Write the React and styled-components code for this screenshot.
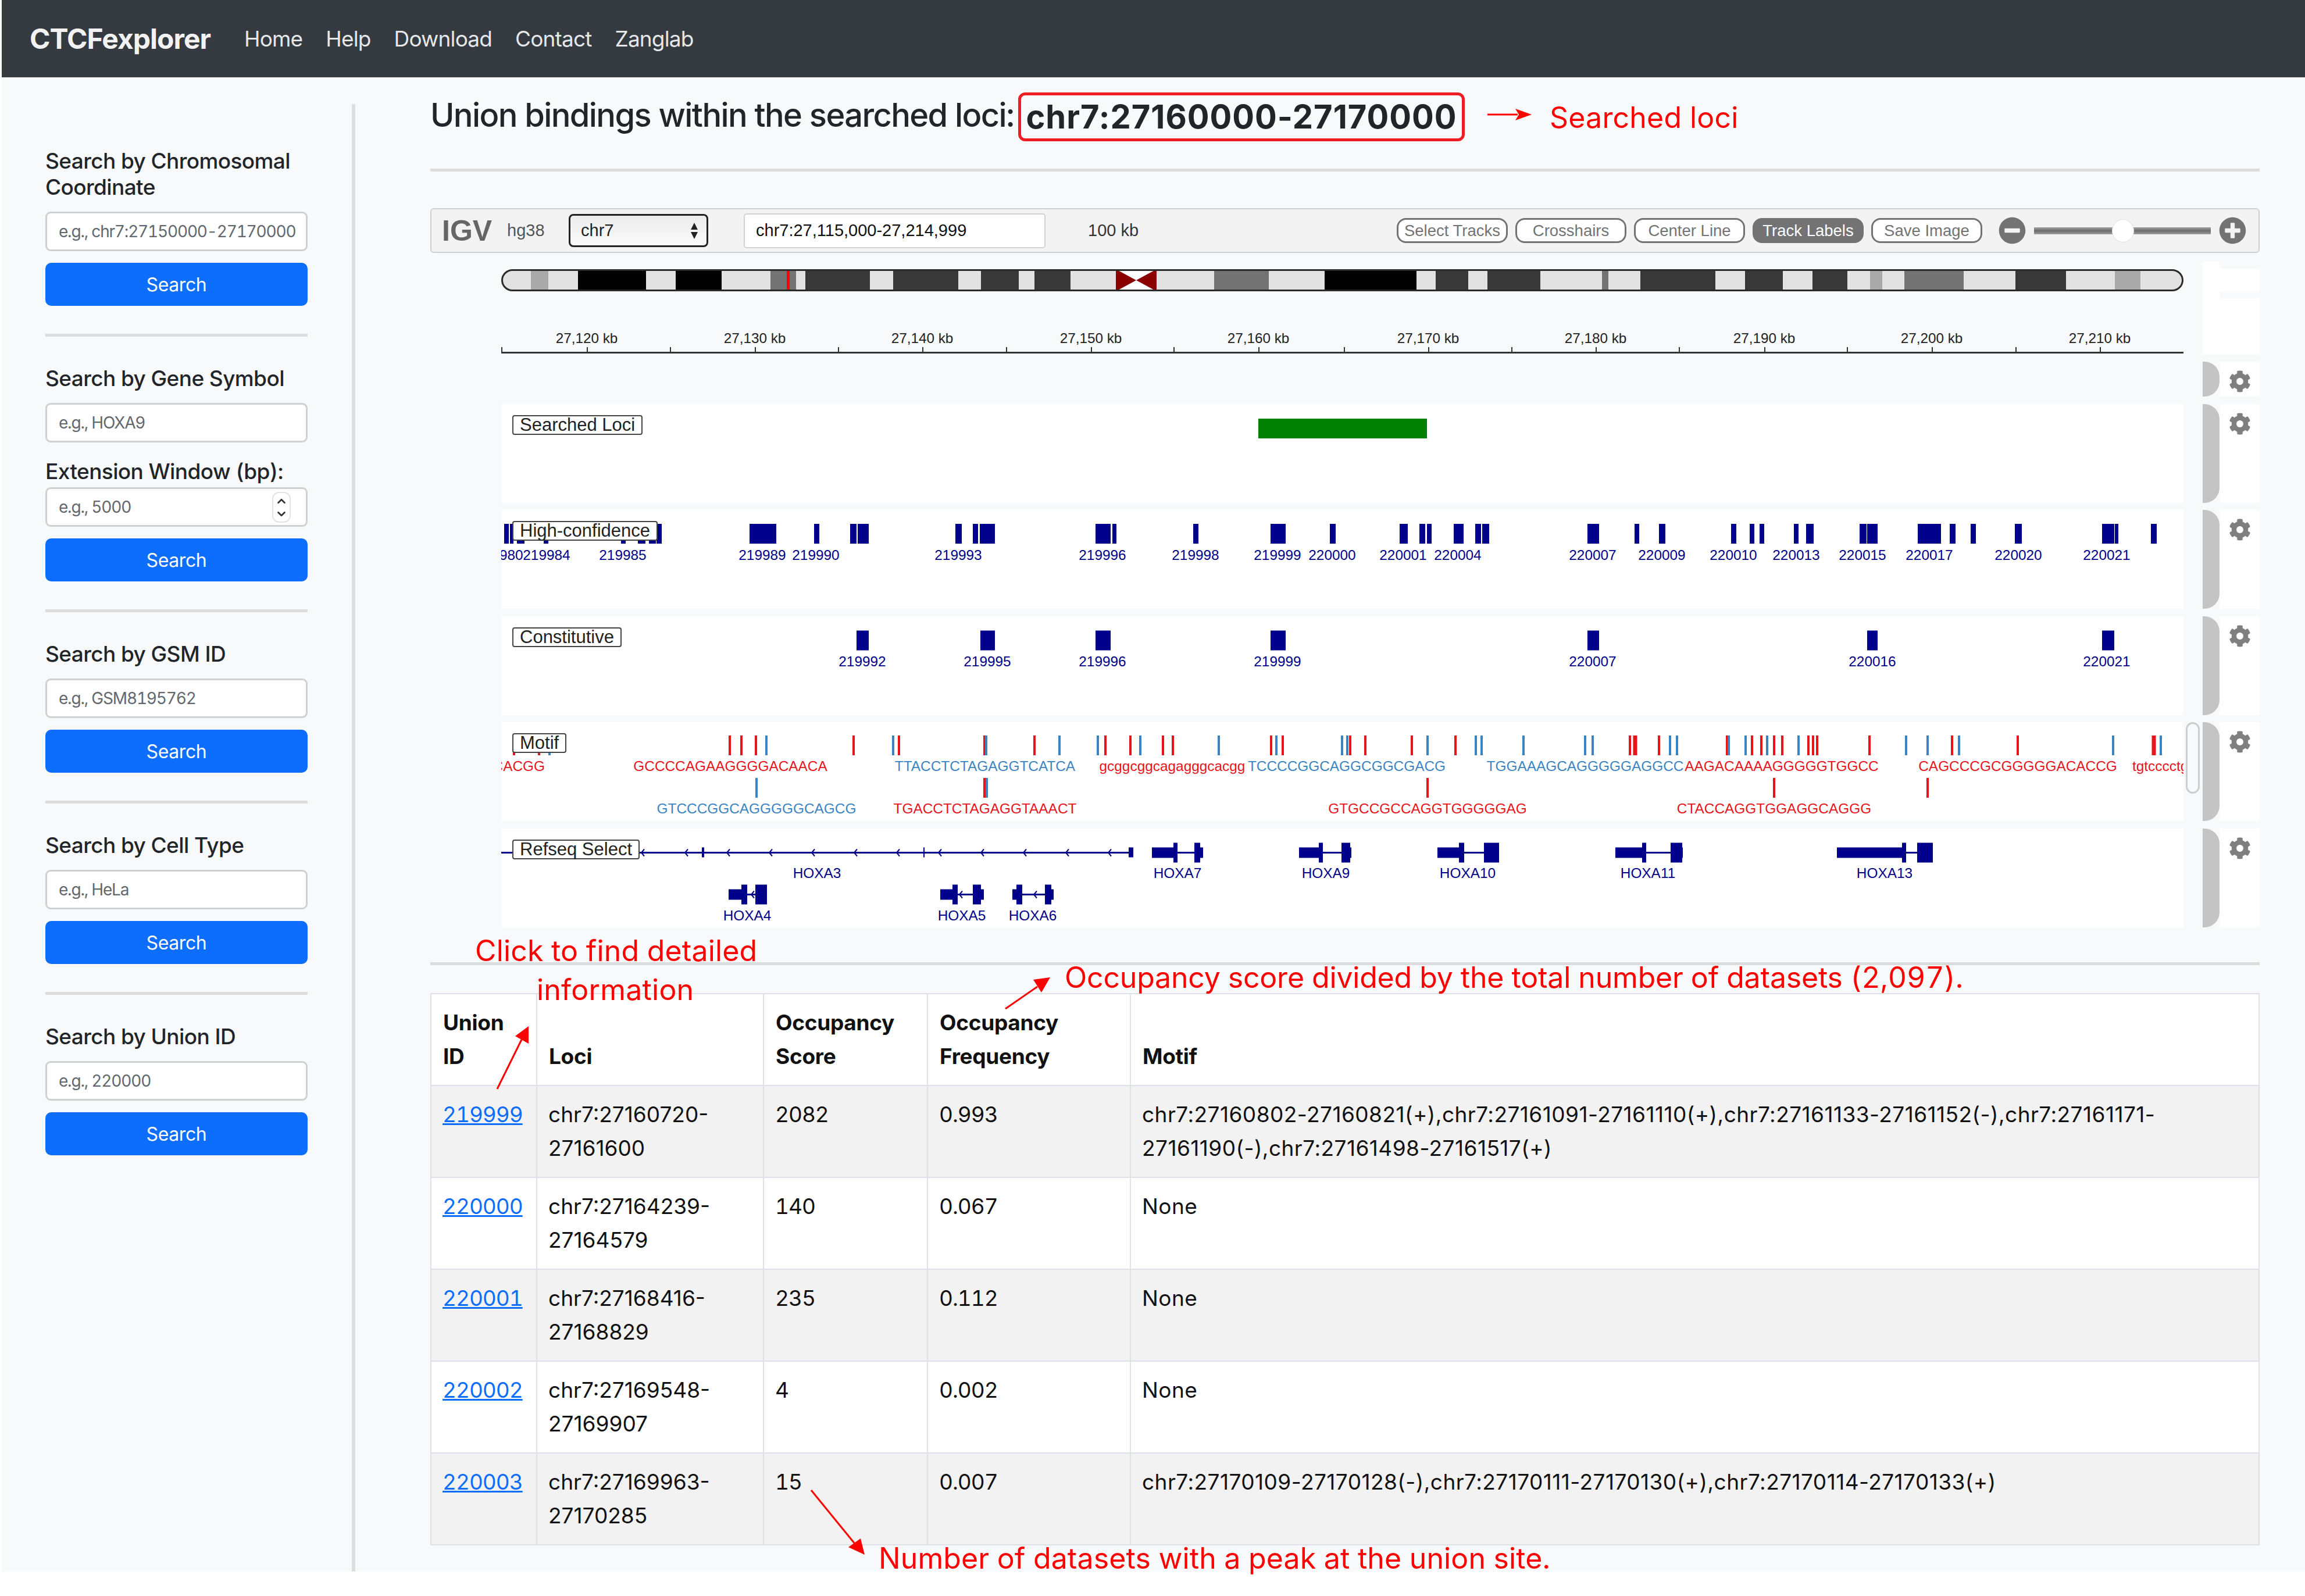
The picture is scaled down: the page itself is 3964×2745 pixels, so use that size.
import styled, { createGlobalStyle } from "styled-components";
import { FaCog, FaMinusCircle, FaPlusCircle } from "react-icons/fa";
import { ChevronUp, ChevronDown } from "lucide-react";

const UI_FONT = `Inter, "Liberation Sans", sans-serif`;
const IGV_FONT = `"Liberation Sans", Arial, sans-serif`;
const NAVY = "#00008b";
const RED = "#e8141c";
const BLUE = "#3a84c4";

const GlobalStyle = createGlobalStyle`
  html, body {
    margin: 0;
    padding: 0;
    background: #fff;
  }
  * {
    box-sizing: border-box;
  }
`;

const Page = styled.div`
  position: relative;
  width: 3964px;
  height: 2745px;
  overflow: hidden;
  font-family: ${UI_FONT};
  font-variant-numeric: tabular-nums;
  color: #212529;
`;

const Frame = styled.div`
  margin-left: 3px;
  height: 2703px;
  background: #f8f9fa;
  display: flex;
  flex-direction: column;
`;

const NavBar = styled.nav`
  height: 133px;
  background: #343a40;
  display: flex;
  align-items: center;
  padding-left: 48px;
`;

const Brand = styled.a`
  width: 369px;
  font-size: 48px;
  font-weight: 700;
  letter-spacing: -1px;
  color: #f2f2f2;
`;

const NavLinks = styled.div`
  display: flex;
  gap: 40px;
`;

const NavLink = styled.a`
  font-size: 37px;
  letter-spacing: -0.85px;
  color: #e6e7e8;
`;

const Body = styled.div`
  flex: 1;
  display: flex;
  align-items: stretch;
`;

const Sidebar = styled.aside`
  width: 608px;
  margin-top: 46px;
  padding: 75px 76px 0 75px;
  border-right: 6px solid #dcdfe2;
`;

const SearchGroup = styled.section`
  display: flex;
  flex-direction: column;
`;

const SearchTitle = styled.div`
  font-size: 37px;
  line-height: 45px;
  letter-spacing: -0.6px;
  font-weight: 500;
  margin-bottom: ${({ $gap }) => $gap || "20px"};
`;

const FieldWrap = styled.div`
  position: relative;
  margin-bottom: ${({ $gap }) => $gap || "20px"};
`;

const Field = styled.input`
  display: block;
  width: 100%;
  height: 68px;
  padding: 0 6px 0 20px;
  background: #fff;
  border: 3px solid #ced0d2;
  border-radius: 9px;
  font-family: ${UI_FONT};
  font-size: 28px;
  letter-spacing: -1.2px;
  font-variant-numeric: tabular-nums;
  outline: none;

  &::placeholder {
    color: #62686e;
    opacity: 1;
  }
`;

const Spinner = styled.div`
  position: absolute;
  right: 29px;
  top: 8px;
  width: 32px;
  height: 53px;
  background: #fff;
  border: 2px solid #e3e3e3;
  border-radius: 12px;
  display: flex;
  flex-direction: column;
  align-items: center;
  justify-content: center;
  color: #333;
`;

const SearchButton = styled.button`
  display: block;
  width: 100%;
  height: 74px;
  background: #0d6efd;
  border: none;
  border-radius: 10px;
  color: #fff;
  font-family: ${UI_FONT};
  font-size: 32px;
  letter-spacing: -0.4px;
`;

const SideRule = styled.hr`
  height: 5px;
  margin: 48px 0 49px;
  border: none;
  background: #dcdcdc;
`;

const Main = styled.main`
  width: 3146px;
  margin-left: 129px;
  display: flex;
  flex-direction: column;
`;

const Headline = styled.div`
  height: 157px;
  display: flex;
  align-items: flex-start;
  padding-top: 26px;
  font-size: 56px;
  line-height: 78px;
  letter-spacing: -1.6px;
  font-weight: 500;
`;

const LociBox = styled.span`
  height: 84px;
  margin-left: 8px;
  padding: 0 8px;
  display: flex;
  align-items: center;
  border: 5px solid #ee1c25;
  border-radius: 12px;
  font-weight: 700;
  font-variant-numeric: normal;
  letter-spacing: 1px;
`;

const Rule = styled.hr`
  height: 5px;
  margin: 0;
  border: none;
  background: #dcdcdc;
`;

const IgvBar = styled.div`
  margin-top: 63px;
  height: 77px;
  display: flex;
  align-items: center;
  background: #f3f3f3;
  border: 2px solid #cfcfcf;
  border-radius: 6px;
  font-family: ${IGV_FONT};
  font-size: 29px;
`;

const IgvLogo = styled.span`
  margin-left: 18px;
  width: 112px;
  font-size: 50px;
  font-weight: 700;
  color: #666;
`;

const Genome = styled.span`
  width: 106px;
  color: #555;
`;

const ChromSelect = styled.div`
  width: 240px;
  height: 57px;
  padding: 0 14px 0 18px;
  display: flex;
  align-items: center;
  justify-content: space-between;
  background: linear-gradient(#ececec, #fafafa);
  border: 3px solid #222;
  border-radius: 8px;
  color: #222;
`;

const SelectArrows = styled.svg`
  width: 14px;
  height: 30px;
`;

const LocusBox = styled.div`
  margin-left: 61px;
  width: 519px;
  height: 60px;
  padding-left: 19px;
  display: flex;
  align-items: center;
  background: #fff;
  border: 2px solid #d2d2d2;
  border-radius: 5px;
  color: #111;
`;

const WindowSize = styled.span`
  margin-left: 73px;
  width: 531px;
  color: #333;
`;

const BarButtons = styled.div`
  display: flex;
  gap: 13px;
`;

const BarButton = styled.button`
  width: 191px;
  height: 43px;
  padding: 0;
  display: flex;
  align-items: center;
  justify-content: center;
  background: ${({ $active }) => ($active ? "#737373" : "#fff")};
  border: 3px solid #737373;
  border-radius: 16px;
  color: ${({ $active }) => ($active ? "#fff" : "#737373")};
  font-family: ${IGV_FONT};
  font-size: 27.5px;
`;

const ZoomControl = styled.div`
  margin-left: 28px;
  display: flex;
  align-items: center;
  gap: 14px;
  color: #737373;
  font-size: 47px;

  svg {
    display: block;
  }
`;

const ZoomTrack = styled.div`
  position: relative;
  width: 304px;
  height: 12px;
  background: linear-gradient(#a0a0a0, #6c6c6c 50%, #a0a0a0);
`;

const ZoomThumb = styled.div`
  position: absolute;
  left: 134px;
  top: -14px;
  width: 38px;
  height: 40px;
  border-radius: 50%;
  background: #fff;
  border: 1px solid #e2e2e2;
`;

const TrackGroup = styled.div`
  margin-top: 15px;
`;

const TrackStack = styled.div`
  margin-top: 12px;
  display: flex;
  flex-direction: column;
  gap: 12.5px;
`;

const TrackRow = styled.div`
  margin-left: 122px;
  height: ${({ $height }) => $height || "170px"};
  display: grid;
  grid-template-columns: 2893px 33px 29px 69px;
`;

const Viewport = styled.div`
  position: relative;
  overflow: hidden;
  padding-top: ${({ $top }) => $top || "0"};
  background: ${({ $white }) => ($white ? "#fff" : "transparent")};

  svg {
    display: block;
    width: 100%;
  }
`;

const TrackLabel = styled.div`
  position: absolute;
  left: 19px;
  top: 19px;
  height: 34px;
  padding: 0 11px;
  display: flex;
  align-items: center;
  background: #fff;
  border: 2px solid #444;
  border-radius: 4px;
  font-family: ${IGV_FONT};
  font-size: 31px;
  color: #222;
  white-space: nowrap;
`;

const Gutter = styled.div``;

const ScrollThumb = styled.div`
  width: 24px;
  height: 123px;
  margin-left: 4px;
  background: #f8f9fa;
  border: 3px solid #cbcdcf;
  border-radius: 12px;
`;

const Handle = styled.div`
  background: ${({ $empty }) => ($empty ? "#fff" : "#c4c4c4")};
  border-radius: ${({ $empty }) => ($empty ? "0" : "0 26px 26px 0")};
`;

const GearCell = styled.div`
  height: ${({ $height }) => $height || "auto"};
  margin-top: ${({ $top }) => $top || "0"};
  padding: 15px 0 0 16px;
  background: #fff;
  color: #7f7f7f;
  font-size: 38px;
  line-height: 0;
`;

const ResultRule = styled(Rule)`
  margin-top: 60px;
`;

const ResultTable = styled.table`
  margin-top: 48px;
  width: 3146px;
  table-layout: fixed;
  border-collapse: collapse;
  background: #fff;
  font-size: 37px;
  line-height: 58px;

  th, td {
    border: 2.5px solid #dee2e6;
    text-align: left;
  }

  th {
    padding: 20px;
    vertical-align: bottom;
    font-weight: 700;
    letter-spacing: -0.3px;
    color: #111;
  }

  td {
    padding: 20px 19px;
    vertical-align: top;
    color: #111;
  }

  tbody tr:nth-child(odd) td {
    background: #f2f2f2;
  }
`;

const Cell = styled.td`
  letter-spacing: -1.05px;
`;

const CoordCell = styled.td`
  font-variant-numeric: normal;
  letter-spacing: ${({ $spacing }) => $spacing || "0"};
`;

const UnionLink = styled.a`
  color: #0d6efd;
  text-decoration: underline;
`;

/* red notes drawn on the screenshot, they lie over everything else */
const Note = styled.div`
  position: absolute;
  left: ${({ $x }) => $x}px;
  top: ${({ $y }) => $y}px;
  font-family: ${UI_FONT};
  font-size: 50px;
  line-height: 64px;
  letter-spacing: ${({ $spacing }) => $spacing || "0"};
  color: #ff0000;
  white-space: nowrap;
`;

const ArrowLayer = styled.svg`
  position: absolute;
  left: 0;
  top: 0;
  width: 3964px;
  height: 2745px;
  pointer-events: none;
`;

const searchGroups = [
  { title: <>Search by Chromosomal<br />Coordinate</>, placeholder: "e.g., chr7:27150000-27170000" },
  { title: "Search by Gene Symbol", placeholder: "e.g., HOXA9", extension: true },
  { title: "Search by GSM ID", placeholder: "e.g., GSM8195762" },
  { title: "Search by Cell Type", placeholder: "e.g., HeLa" },
  { title: "Search by Union ID", placeholder: "e.g., 220000" },
];

const barButtons = ["Select Tracks", "Crosshairs", "Center Line", "Track Labels", "Save Image"];

const rows = [
  { id: "219999", loci: "chr7:27160720-27161600", score: 2082, freq: "0.993", motif: "chr7:27160802-27160821(+),chr7:27161091-27161110(+),chr7:27161133-27161152(-),chr7:27161171-27161190(-),chr7:27161498-27161517(+)" },
  { id: "220000", loci: "chr7:27164239-27164579", score: 140, freq: "0.067", motif: "None" },
  { id: "220001", loci: "chr7:27168416-27168829", score: 235, freq: "0.112", motif: "None" },
  { id: "220002", loci: "chr7:27169548-27169907", score: 4, freq: "0.002", motif: "None" },
  { id: "220003", loci: "chr7:27169963-27170285", score: 15, freq: "0.007", motif: "chr7:27170109-27170128(-),chr7:27170111-27170130(+),chr7:27170114-27170133(+)" },
];

// [from, to, fill] in page x
const LIGHT = "#e2e2e2";
const DARK = "#383838";
const MID = "#737373";
const PALE = "#a9a9a9";
const bands = [
  [862, 913, LIGHT], [913, 943, PALE], [943, 994, LIGHT], [994, 1111, "#000"], [1111, 1162, LIGHT],
  [1162, 1241, "#000"], [1241, 1325, LIGHT], [1325, 1369, MID], [1369, 1385, LIGHT], [1385, 1496, DARK],
  [1496, 1536, LIGHT], [1536, 1648, DARK], [1648, 1687, LIGHT], [1687, 1752, DARK], [1752, 1779, LIGHT],
  [1779, 1841, DARK], [1841, 1919, LIGHT], [1989, 2088, LIGHT], [2088, 2182, MID], [2182, 2278, LIGHT],
  [2278, 2436, "#000"], [2436, 2469, LIGHT], [2469, 2525, DARK], [2525, 2558, LIGHT], [2558, 2649, DARK],
  [2649, 2755, LIGHT], [2755, 2766, MID], [2766, 2821, LIGHT], [2821, 2950, DARK], [2950, 3001, LIGHT],
  [3001, 3066, DARK], [3066, 3117, LIGHT], [3117, 3177, DARK], [3177, 3216, LIGHT], [3216, 3237, PALE],
  [3237, 3275, LIGHT], [3275, 3377, MID], [3377, 3466, LIGHT], [3466, 3553, DARK], [3553, 3637, LIGHT],
  [3637, 3681, PALE], [3681, 3755, LIGHT],
];

const minorTicks = [1152, 1441, 1730, 2018, 2311, 2599, 2887, 3176, 3466];
const rulerMarks = [
  [1009, "27,120 kb"], [1298, "27,130 kb"], [1586, "27,140 kb"], [1876, "27,150 kb"], [2164, "27,160 kb"],
  [2456, "27,170 kb"], [2744, "27,180 kb"], [3034, "27,190 kb"], [3322, "27,200 kb"], [3611, "27,210 kb"],
];

const confidenceBars = [
  [867, 875], [877, 883], [889, 902], [935, 943], [1068, 1076], [1097, 1110], [1116, 1128], [1129, 1138],
  [1289, 1335], [1400, 1409], [1462, 1473], [1475, 1494], [1643, 1654], [1673, 1682], [1685, 1711],
  [1884, 1910], [1913, 1920], [2052, 2061], [2185, 2211], [2287, 2297], [2407, 2421], [2441, 2451],
  [2454, 2462], [2500, 2517], [2537, 2547], [2549, 2561], [2730, 2750], [2811, 2819], [2853, 2864],
  [2977, 2986], [3009, 3017], [3026, 3034], [3085, 3093], [3106, 3119], [3198, 3210], [3211, 3229],
  [3298, 3338], [3353, 3363], [3389, 3398], [3465, 3477], [3615, 3636], [3637, 3643], [3699, 3709],
];
const confidenceNames = [
  [859, "219980"], [940, "219984"], [1071, "219985"], [1311, "219989"], [1403, "219990"], [1648, "219993"],
  [1896, "219996"], [2056, "219998"], [2197, "219999"], [2291, "220000"], [2413, "220001"], [2507, "220004"],
  [2739, "220007"], [2858, "220009"], [2981, "220010"], [3089, "220013"], [3203, "220015"], [3318, "220017"],
  [3471, "220020"], [3623, "220021"],
];
const constitutiveBars = [[1473, 1494], [1686, 1711], [1884, 1910], [2185, 2211], [2730, 2750], [3211, 3229], [3615, 3636]];
const constitutiveNames = [
  [1483, "219992"], [1698, "219995"], [1896, "219996"], [2197, "219999"], [2739, "220007"], [3220, "220016"], [3623, "220021"],
];

// motif ticks: x, strand (r/b), width
const motifTop = [
  [884, "r"], [927, "r"], [945, "b"], [1255, "r"], [1275, "r"], [1300, "r"], [1318, "b"], [1468, "r"], [1536, "b"],
  [1546, "r"], [1693, "r"], [1696, "b"], [1779, "r"], [1822, "b"], [1888, "b"], [1901, "r"], [1944, "r"], [1961, "b"],
  [2000, "r"], [2017, "r"], [2096, "b"], [2186, "r"], [2195, "b"], [2206, "r"], [2308, "b"], [2317, "b"], [2322, "r"],
  [2348, "r"], [2428, "r"], [2455, "b"], [2503, "r"], [2538, "b"], [2548, "b"], [2620, "b"], [2726, "b"], [2739, "b"],
  [2803, "r"], [2812, "r", 7], [2853, "r"], [2872, "b"], [2884, "b"], [2970, "r"], [2973, "b"], [3002, "b"], [3013, "r"],
  [3029, "r"], [3039, "b"], [3051, "r"], [3065, "r"], [3093, "b"], [3110, "r"], [3118, "r"], [3125, "r"], [3215, "r"],
  [3278, "b"], [3315, "b"], [3357, "r"], [3369, "b"], [3470, "r"], [3634, "b"], [3704, "r", 7], [3716, "b"],
];
const motifBottom = [[1301, "b"], [1693, "r"], [1697, "b"], [2455, "r"], [3051, "r"], [3315, "r"]];
const motifNames = [
  [937, 1317, "r", "CCTGCGGGCCCCCACGG", "end"],
  [1256, 1317, "r", "GCCCCAGAAGGGGACAACA"],
  [1694, 1317, "b", "TTACCTCTAGAGGTCATCA"],
  [2016, 1317, "r", "gcggcggcagagggcacgg"],
  [2316, 1317, "b", "TCCCCGGCAGGCGGCGACG"],
  [2726, 1317, "b", "TGGAAAGCAGGGGGAGGCC"],
  [3064, 1317, "r", "AAGACAAAAGGGGGTGGCC"],
  [3470, 1317, "r", "CAGCCCGCGGGGGACACCG"],
  [3667, 1317, "r", "tgtcccctgcagagggcagc", "start"],
  [1301, 1390, "b", "GTCCCGGCAGGGGGCAGCG"],
  [1694, 1390, "r", "TGACCTCTAGAGGTAAACT"],
  [2455, 1390, "r", "GTGCCGCCAGGTGGGGGAG"],
  [3051, 1390, "r", "CTACCAGGTGGAGGCAGGG"],
];

// gene: name, label x, label y, centre y, thin boxes, tall boxes
const genes = [
  { name: "HOXA4", labelX: 1285, labelY: 1573, y: 1538, from: 1253, to: 1319, utr: [[1253, 1275]], cds: [[1275, 1285], [1299, 1319]], arrows: [1294] },
  { name: "HOXA5", labelX: 1654, labelY: 1573, y: 1538, from: 1617, to: 1692, utr: [[1617, 1638], [1687, 1692]], cds: [[1638, 1647], [1673, 1687]], arrows: [1652] },
  { name: "HOXA6", labelX: 1776, labelY: 1573, y: 1538, from: 1741, to: 1812, utr: [[1741, 1748], [1808, 1812]], cds: [[1748, 1758], [1797, 1808]], arrows: [1780] },
  { name: "HOXA7", labelX: 2025, labelY: 1500, y: 1466, from: 1981, to: 2069, utr: [[1981, 2018], [2064, 2069]], cds: [[2018, 2025], [2054, 2064]] },
  { name: "HOXA9", labelX: 2280, labelY: 1500, y: 1466, from: 2234, to: 2324, utr: [[2234, 2268], [2322, 2324]], cds: [[2268, 2275], [2307, 2322]] },
  { name: "HOXA10", labelX: 2524, labelY: 1500, y: 1466, from: 2472, to: 2578, utr: [[2472, 2509]], cds: [[2509, 2518], [2552, 2578]] },
  { name: "HOXA11", labelX: 2834, labelY: 1500, y: 1466, from: 2778, to: 2894, utr: [[2778, 2824], [2893, 2894]], cds: [[2824, 2831], [2873, 2893]] },
  { name: "HOXA13", labelX: 3241, labelY: 1500, y: 1466, from: 3159, to: 3324, utr: [[3159, 3271]], cds: [[3271, 3278], [3297, 3324]] },
];
const hoxa3Arrows = [1105, 1180, 1252, 1325, 1398, 1471, 1544, 1616, 1689, 1762, 1835, 1908];

const strandColor = (s) => (s === "r" ? RED : BLUE);

function IdeogramDrawing() {
  return (
    <svg viewBox="862 463 2893 38" height="38">
      <defs>
        <clipPath id="ideoClip">
          <rect x="863.5" y="464.5" width="2890" height="35" rx="18" />
        </clipPath>
      </defs>
      <g clipPath="url(#ideoClip)">
        {bands.map(([a, b, fill]) => (
          <rect key={a} x={a} y="463" width={b - a} height="38" fill={fill} />
        ))}
        <rect x="1919" y="463" width="70" height="38" fill="#fff" />
        <polygon points="1919,463 1954,482 1919,501" fill="#8b0000" />
        <polygon points="1989,463 1954,482 1989,501" fill="#8b0000" />
        <rect x="1353" y="463" width="5" height="38" fill="#ff0000" />
      </g>
      <rect x="863.5" y="464.5" width="2890" height="35" rx="18" fill="none" stroke="#2b2b2b" strokeWidth="3" />
    </svg>
  );
}

function RulerDrawing() {
  return (
    <svg viewBox="862 513 2893 97" height="97">
      <rect x="862" y="605" width="2893" height="3" fill="#333" />
      {[862, ...minorTicks, ...rulerMarks.map((m) => m[0])].map((x) => (
        <rect key={x} x={x} y="597" width="2" height="9" fill="#333" />
      ))}
      {rulerMarks.map(([x, text]) => (
        <text key={x} x={x} y="590" textAnchor="middle" fontFamily={IGV_FONT} fontSize="24.3" fill="#222">
          {text}
        </text>
      ))}
    </svg>
  );
}

function FeatureTrack({ top, barTop, labelBaseline, bars, names }) {
  return (
    <svg viewBox={`862 ${top} 2893 170`} height="170">
      {bars.map(([a, b]) => (
        <rect key={a} x={a} y={barTop} width={b - a} height="34" fill={NAVY} />
      ))}
      {names.map(([x, name]) => (
        <text key={x} x={x} y={labelBaseline} textAnchor="middle" fontFamily={IGV_FONT} fontSize="24.4" fill={NAVY}>
          {name}
        </text>
      ))}
    </svg>
  );
}

function MotifTrack() {
  return (
    <svg viewBox="862 1242 2893 170" height="170">
      {motifTop.map(([x, s, w]) => (
        <rect key={x} x={x - (w || 4) / 2} y="1265" width={w || 4} height="34" fill={strandColor(s)} />
      ))}
      {motifBottom.map(([x, s]) => (
        <rect key={x} x={x - 2} y="1338" width="4" height="34" fill={strandColor(s)} />
      ))}
      {motifNames.map(([x, y, s, seq, anchor]) => (
        <text key={seq} x={x} y={y + 9} textAnchor={anchor || "middle"} fontFamily={IGV_FONT} fontSize="24.4" fill={strandColor(s)}>
          {seq}
        </text>
      ))}
    </svg>
  );
}

function GeneArrow({ x, y }) {
  return <path d={`M${x + 3} ${y - 6}L${x - 2} ${y}L${x + 3} ${y + 6}`} fill="none" stroke={NAVY} strokeWidth="2" />;
}

function RefseqTrack() {
  return (
    <svg viewBox="862 1424.5 2893 170" height="170">
      <rect x="862" y="1464.5" width="1087" height="3" fill={NAVY} />
      {hoxa3Arrows.map((x) => (
        <GeneArrow key={x} x={x} y={1466} />
      ))}
      <rect x="1207" y="1457" width="4" height="17" fill={NAVY} />
      <rect x="1588" y="1457" width="2" height="17" fill={NAVY} />
      <rect x="1941" y="1457" width="8" height="17" fill={NAVY} />
      <text x="1405" y="1509" textAnchor="middle" fontFamily={IGV_FONT} fontSize="24.4" fill={NAVY}>HOXA3</text>
      {genes.map((g) => (
        <g key={g.name}>
          <rect x={g.from} y={g.y - 1.5} width={g.to - g.from} height="3" fill={NAVY} />
          {g.utr.map(([a, b]) => (
            <rect key={a} x={a} y={g.y - 9} width={b - a} height="18" fill={NAVY} />
          ))}
          {g.cds.map(([a, b]) => (
            <rect key={a} x={a} y={g.y - 17} width={b - a} height="34" fill={NAVY} />
          ))}
          {(g.arrows || []).map((x) => (
            <GeneArrow key={x} x={x} y={g.y} />
          ))}
          <text x={g.labelX} y={g.labelY + 9} textAnchor="middle" fontFamily={IGV_FONT} fontSize="24.4" fill={NAVY}>
            {g.name}
          </text>
        </g>
      ))}
    </svg>
  );
}

function Track({ label, height, children, thumb }) {
  return (
    <TrackRow $height={height}>
      <Viewport $white={!!label}>
        {children}
        {label && <TrackLabel>{label}</TrackLabel>}
      </Viewport>
      <Gutter>{thumb && <ScrollThumb />}</Gutter>
      <Handle />
      <GearCell>
        <FaCog />
      </GearCell>
    </TrackRow>
  );
}

function App() {
  return (
    <Page>
      <GlobalStyle />
      <Frame>
        <NavBar>
          <Brand>CTCFexplorer</Brand>
          <NavLinks>
            {["Home", "Help", "Download", "Contact", "Zanglab"].map((item) => (
              <NavLink key={item}>{item}</NavLink>
            ))}
          </NavLinks>
        </NavBar>
        <Body>
          <Sidebar>
            {searchGroups.map((group, i) => (
              <SearchGroup key={group.placeholder}>
                {i > 0 && <SideRule />}
                <SearchTitle>{group.title}</SearchTitle>
                <FieldWrap $gap={group.extension ? "27px" : undefined}>
                  <Field placeholder={group.placeholder} />
                </FieldWrap>
                {group.extension && (
                  <>
                    <SearchTitle $gap="5px">Extension Window (bp):</SearchTitle>
                    <FieldWrap>
                      <Field placeholder="e.g., 5000" />
                      <Spinner>
                        <ChevronUp size={22} strokeWidth={3} />
                        <ChevronDown size={22} strokeWidth={3} />
                      </Spinner>
                    </FieldWrap>
                  </>
                )}
                <SearchButton>Search</SearchButton>
              </SearchGroup>
            ))}
          </Sidebar>
          <Main>
            <Headline>
              Union bindings within the searched loci:
              <LociBox>chr7:27160000-27170000</LociBox>
            </Headline>
            <Rule />
            <IgvBar>
              <IgvLogo>IGV</IgvLogo>
              <Genome>hg38</Genome>
              <ChromSelect>
                chr7
                <SelectArrows viewBox="0 0 14 30">
                  <path d="M7 1L13 13H1Z M7 29L1 17H13Z" fill="#222" />
                </SelectArrows>
              </ChromSelect>
              <LocusBox>chr7:27,115,000-27,214,999</LocusBox>
              <WindowSize>100 kb</WindowSize>
              <BarButtons>
                {barButtons.map((name) => (
                  <BarButton key={name} $active={name === "Track Labels"}>
                    {name}
                  </BarButton>
                ))}
              </BarButtons>
              <ZoomControl>
                <FaMinusCircle />
                <ZoomTrack>
                  <ZoomThumb />
                </ZoomTrack>
                <FaPlusCircle />
              </ZoomControl>
            </IgvBar>
            <TrackGroup>
              <TrackRow $height="63px">
                <Viewport $top="13px">
                  <IdeogramDrawing />
                </Viewport>
                <Gutter />
                <Handle $empty />
                <GearCell $top="12px" $height="39px" />
              </TrackRow>
              <TrackRow $height="97px">
                <Viewport>
                  <RulerDrawing />
                </Viewport>
                <Gutter />
                <Handle $empty />
                <GearCell />
              </TrackRow>
            </TrackGroup>
            <TrackStack>
              <Track height="60px" />
              <Track label="Searched Loci">
                <svg viewBox="862 695 2893 170" height="170">
                  <rect x="2164" y="720" width="290" height="34" fill="#008000" />
                </svg>
              </Track>
              <Track label="High-confidence">
                <FeatureTrack top={877} barTop={901} labelBaseline={963} bars={confidenceBars} names={confidenceNames} />
              </Track>
              <Track label="Constitutive">
                <FeatureTrack top={1059.5} barTop={1084} labelBaseline={1145} bars={constitutiveBars} names={constitutiveNames} />
              </Track>
              <Track label="Motif" thumb>
                <MotifTrack />
              </Track>
              <Track label="Refseq Select">
                <RefseqTrack />
              </Track>
            </TrackStack>
            <ResultRule />
            <ResultTable>
              <colgroup>
                <col style={{ width: 182 }} />
                <col style={{ width: 390 }} />
                <col style={{ width: 282 }} />
                <col style={{ width: 349 }} />
                <col />
              </colgroup>
              <thead>
                <tr>
                  <th>Union ID</th>
                  <th>Loci</th>
                  <th>Occupancy Score</th>
                  <th>Occupancy Frequency</th>
                  <th>Motif</th>
                </tr>
              </thead>
              <tbody>
                {rows.map((row) => (
                  <tr key={row.id}>
                    <Cell><UnionLink href="#">{row.id}</UnionLink></Cell>
                    <CoordCell>{row.loci}</CoordCell>
                    <Cell>{row.score}</Cell>
                    <Cell>{row.freq}</Cell>
                    <CoordCell $spacing="0.45px">{row.motif}</CoordCell>
                  </tr>
                ))}
              </tbody>
            </ResultTable>
          </Main>
        </Body>
      </Frame>

      <Note $x={2665} $y={170} $spacing="0.2px">Searched loci</Note>
      <Note $x={817} $y={1603} $spacing="0.15px">Click to find detailed</Note>
      <Note $x={923} $y={1670} $spacing="0.2px">information</Note>
      <Note $x={1831} $y={1649} $spacing="-0.2px">Occupancy score divided by the total number of datasets (2,097).</Note>
      <Note $x={1511} $y={2648} $spacing="0.1px">Number of datasets with a peak at the union site.</Note>

      <ArrowLayer viewBox="0 0 3964 2745">
        <g stroke="#ff0000" strokeWidth="3" fill="#ff0000">
          <line x1="2558" y1="197" x2="2610" y2="197" />
          <polygon points="2634,197 2606,187 2612,197 2606,207" stroke="none" />
          <line x1="855" y1="1873" x2="897" y2="1788" />
          <polygon points="909,1765 886,1782 909,1795" stroke="none" />
          <line x1="1729" y1="1735" x2="1784" y2="1697" />
          <polygon points="1806,1681 1777,1685 1791,1707" stroke="none" />
          <line x1="1395" y1="2563" x2="1470" y2="2655" />
          <polygon points="1487,2674 1459,2661 1480,2646" stroke="none" />
        </g>
      </ArrowLayer>
    </Page>
  );
}

export default App;
